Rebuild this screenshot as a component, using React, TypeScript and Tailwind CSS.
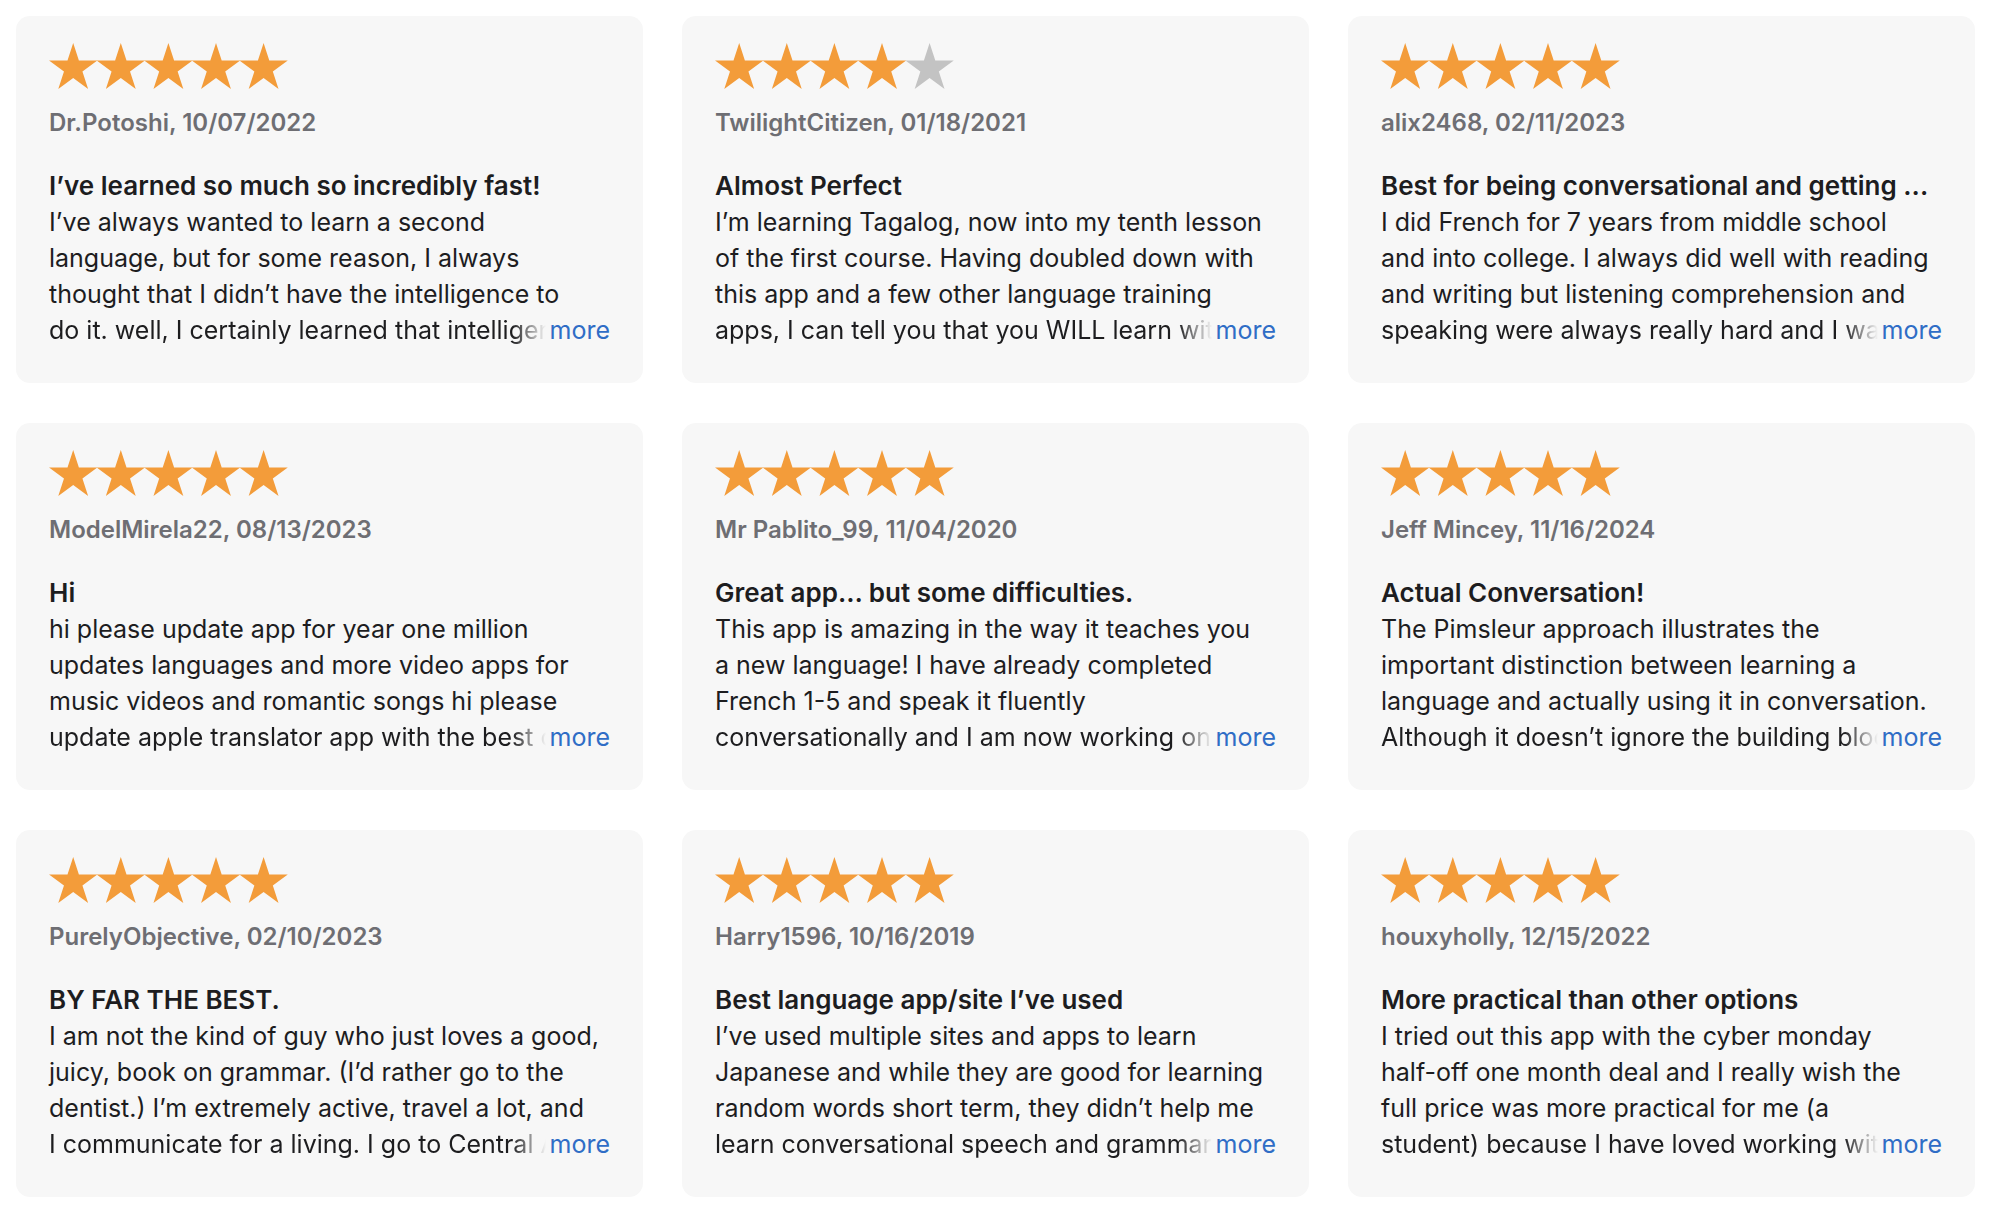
import React from 'react'

interface Review {
  stars: number
  author: string
  date: string
  title: string
  lines: string[]
}

const reviews: Review[] = [
  {
    stars: 5,
    author: 'Dr.Potoshi',
    date: '10/07/2022',
    title: 'I’ve learned so much so incredibly fast!',
    lines: [
      'I’ve always wanted to learn a second',
      'language, but for some reason, I always',
      'thought that I didn’t have the intelligence to',
      'do it. well, I certainly learned that intelligence',
    ],
  },
  {
    stars: 4,
    author: 'TwilightCitizen',
    date: '01/18/2021',
    title: 'Almost Perfect',
    lines: [
      'I’m learning Tagalog, now into my tenth lesson',
      'of the first course. Having doubled down with',
      'this app and a few other language training',
      'apps, I can tell you that you WILL learn with',
    ],
  },
  {
    stars: 5,
    author: 'alix2468',
    date: '02/11/2023',
    title: 'Best for being conversational and getting ...',
    lines: [
      'I did French for 7 years from middle school',
      'and into college. I always did well with reading',
      'and writing but listening comprehension and',
      'speaking were always really hard and I was',
    ],
  },
  {
    stars: 5,
    author: 'ModelMirela22',
    date: '08/13/2023',
    title: 'Hi',
    lines: [
      'hi please update app for year one million',
      'updates languages and more video apps for',
      'music videos and romantic songs hi please',
      'update apple translator app with the best of',
    ],
  },
  {
    stars: 5,
    author: 'Mr Pablito_99',
    date: '11/04/2020',
    title: 'Great app… but some difficulties.',
    lines: [
      'This app is amazing in the way it teaches you',
      'a new language! I have already completed',
      'French 1-5 and speak it fluently',
      'conversationally and I am now working on',
    ],
  },
  {
    stars: 5,
    author: 'Jeff Mincey',
    date: '11/16/2024',
    title: 'Actual Conversation!',
    lines: [
      'The Pimsleur approach illustrates the',
      'important distinction between learning a',
      'language and actually using it in conversation.',
      'Although it doesn’t ignore the building blocks',
    ],
  },
  {
    stars: 5,
    author: 'PurelyObjective',
    date: '02/10/2023',
    title: 'BY FAR THE BEST.',
    lines: [
      'I am not the kind of guy who just loves a good,',
      'juicy, book on grammar. (I’d rather go to the',
      'dentist.) I’m extremely active, travel a lot, and',
      'I communicate for a living. I go to Central Am',
    ],
  },
  {
    stars: 5,
    author: 'Harry1596',
    date: '10/16/2019',
    title: 'Best language app/site I’ve used',
    lines: [
      'I’ve used multiple sites and apps to learn',
      'Japanese and while they are good for learning',
      'random words short term, they didn’t help me',
      'learn conversational speech and grammar',
    ],
  },
  {
    stars: 5,
    author: 'houxyholly',
    date: '12/15/2022',
    title: 'More practical than other options',
    lines: [
      'I tried out this app with the cyber monday',
      'half-off one month deal and I really wish the',
      'full price was more practical for me (a',
      'student) because I have loved working with',
    ],
  },
]

function starPoints(cx: number, cy: number, R: number, r: number) {
  const pts: string[] = []
  for (let i = 0; i < 10; i++) {
    const rad = i % 2 === 0 ? R : r
    const a = (Math.PI / 5) * i - Math.PI / 2
    pts.push(`${(cx + rad * Math.cos(a)).toFixed(2)},${(cy + rad * Math.sin(a)).toFixed(2)}`)
  }
  return pts.join(' ')
}

function Stars({ count }: { count: number }) {
  const R = 25.4
  const r = R * 0.382
  return (
    <svg width="240" height="46" viewBox="0 0 240 46" className="block">
      {[0, 1, 2, 3, 4].map((i) => (
        <polygon
          key={i}
          points={starPoints(24.2 + i * 47.6, R, R, r)}
          fill={i < count ? '#f39c3a' : '#c3c3c3'}
        />
      ))}
    </svg>
  )
}

function ReviewCard({ review }: { review: Review }) {
  const last = review.lines.length - 1
  return (
    <div className="h-[367px] rounded-[14px] bg-[#f7f7f7] px-[33px] pt-[27px]">
      <Stars count={review.stars} />
      <p className="mt-[16px] text-[24px] leading-[36px] font-semibold text-[#6e6e73] whitespace-nowrap">
        {review.author}, {review.date}
      </p>
      <h3 className="mt-[27px] text-[26px] leading-[36px] font-semibold text-[#1d1d1f] whitespace-nowrap overflow-hidden">
        {review.title}
      </h3>
      <div className="text-[25px] leading-[36px] text-[#1d1d1f]">
        {review.lines.map((line, i) =>
          i === last ? (
            <div key={i} className="flex whitespace-nowrap">
              <span className="min-w-0 flex-1 overflow-hidden [mask-image:linear-gradient(to_right,black_calc(100%-38px),transparent_calc(100%-4px))]">
                {line}
              </span>
              <span className="shrink-0 text-[#2f6dc6]">more</span>
            </div>
          ) : (
            <div key={i} className="whitespace-nowrap">
              {line}
            </div>
          )
        )}
      </div>
    </div>
  )
}

export default function App() {
  return (
    <div className="min-h-screen bg-white pl-[16px] pt-[16px] font-['Inter',sans-serif] antialiased">
      <div className="grid w-[1959px] grid-cols-3 gap-x-[39px] gap-y-[40px]">
        {reviews.map((review) => (
          <ReviewCard key={review.author} review={review} />
        ))}
      </div>
    </div>
  )
}
